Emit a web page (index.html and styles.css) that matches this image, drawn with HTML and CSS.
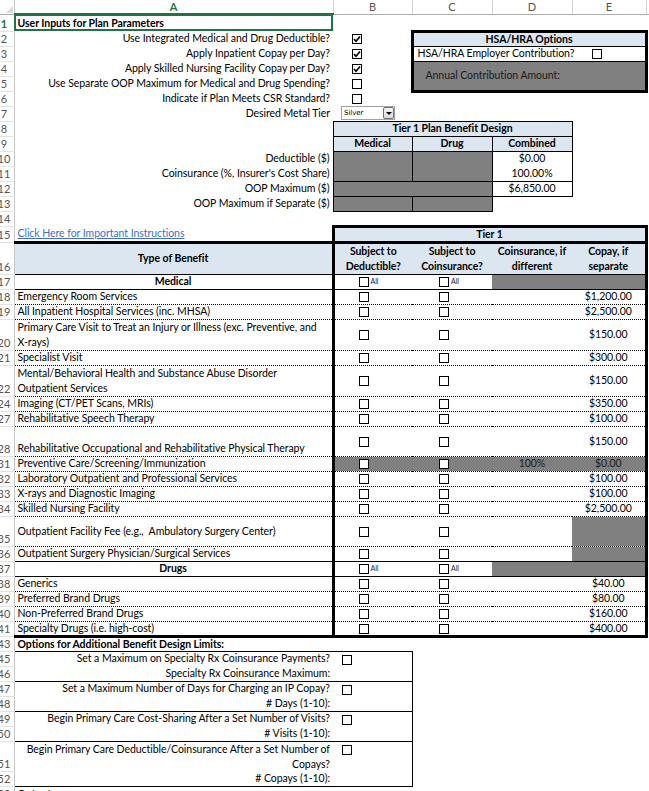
FILE: index.html
```html
<!DOCTYPE html>
<html>
<head>
<meta charset="utf-8">
<title>Plan Parameters</title>
<link rel="stylesheet" href="styles.css">
</head>
<body>
<table class="sheet">
<colgroup><col class="c-rh"><col class="c-a"><col class="c-b"><col class="c-c"><col class="c-d"><col class="c-e"><col class="c-f"></colgroup>
<tr class="hdr"><th class="corner"><span class="tri"></span></th><th class="ch ch-sel">A</th><th class="ch">B</th><th class="ch">C</th><th class="ch">D</th><th class="ch">E</th><th class="ch"></th></tr>

<tr class="h17"><th class="rh"><div class="rn rn-sel">1</div></th><td class="bold sel">User Inputs for Plan Parameters</td><td></td><td></td><td></td><td></td><td></td></tr>

<tr><th class="rh"><div class="rn">2</div></th><td class="r">Use Integrated Medical and Drug Deductible?</td><td class="pk19"><span class="cb"><svg viewBox="0 0 8 8"><polyline points="1,4 3,6.3 7,1.5"/></svg></span></td><td colspan="3" class="blue bold c hsa-top">HSA/HRA Options</td><td></td></tr>

<tr><th class="rh"><div class="rn">3</div></th><td class="r">Apply Inpatient Copay per Day?</td><td class="pk19"><span class="cb"><svg viewBox="0 0 8 8"><polyline points="1,4 3,6.3 7,1.5"/></svg></span></td><td colspan="2" class="hsa-l">HSA/HRA Employer Contribution?</td><td class="hsa-r pk20"><span class="cb"></span></td><td></td></tr>

<tr><th class="rh"><div class="rn">4</div></th><td class="r">Apply Skilled Nursing Facility Copay per Day?</td><td class="pk19"><span class="cb"><svg viewBox="0 0 8 8"><polyline points="1,4 3,6.3 7,1.5"/></svg></span></td><td colspan="3" rowspan="2" class="gray hsa-bot">Annual Contribution Amount:</td><td></td></tr>

<tr><th class="rh"><div class="rn">5</div></th><td class="r">Use Separate OOP Maximum for Medical and Drug Spending?</td><td class="pk19"><span class="cb"></span></td><td></td></tr>

<tr><th class="rh"><div class="rn">6</div></th><td class="r">Indicate if Plan Meets CSR Standard?</td><td class="pk19"><span class="cb"></span></td><td></td><td></td><td></td><td></td></tr>

<tr><th class="rh"><div class="rn">7</div></th><td class="r">Desired Metal Tier</td><td class="pk8"><span class="dd"><span class="dd-val">Silver</span><span class="dd-btn"><span class="dd-arrow"></span></span></span></td><td></td><td></td><td></td><td></td></tr>

<tr><th class="rh"><div class="rn">8</div></th><td></td><td colspan="3" class="blue bold c box">Tier 1 Plan Benefit Design</td><td></td><td></td></tr>

<tr><th class="rh"><div class="rn">9</div></th><td></td><td class="blue bold c box">Medical</td><td class="blue bold c box">Drug</td><td class="blue bold c box">Combined</td><td></td><td></td></tr>

<tr><th class="rh"><div class="rn">10</div></th><td class="r">Deductible ($)</td><td rowspan="2" class="gray box"></td><td rowspan="2" class="gray box"></td><td class="c box-top">$0.00</td><td></td><td></td></tr>

<tr><th class="rh"><div class="rn">11</div></th><td class="r">Coinsurance (%, Insurer's Cost Share)</td><td class="c box-bot">100.00%</td><td></td><td></td></tr>

<tr><th class="rh"><div class="rn">12</div></th><td class="r">OOP Maximum ($)</td><td colspan="2" class="gray box"></td><td class="c box">$6,850.00</td><td></td><td></td></tr>

<tr><th class="rh"><div class="rn">13</div></th><td class="r">OOP Maximum if Separate ($)</td><td class="gray box"></td><td class="gray box"></td><td></td><td></td><td></td></tr>

<tr><th class="rh"><div class="rn">14</div></th><td></td><td></td><td></td><td></td><td></td><td></td></tr>

<tr class="h16"><th class="rh"><div class="rn">15</div></th><td class="link-cell"><span class="link">Click Here for Important Instructions</span></td><td colspan="4" class="blue bold c tier">Tier 1</td><td></td></tr>

<tr class="h31"><th class="rh"><div class="rn">16</div></th><td class="blue bold c b-s">Type of Benefit</td><td class="blue bold c two b-s lT">Subject to<br>Deductible?</td><td class="blue bold c two b-s">Subject to<br>Coinsurance?</td><td class="blue bold c two b-s">Coinsurance, if<br>different</td><td class="blue bold c two b-s rT">Copay, if<br>separate</td><td></td></tr>

<tr><th class="rh"><div class="rn">17</div></th><td class="bold c b-s">Medical</td><td class="pk24 b-s lT"><span class="cb"></span><span class="all">All</span></td><td class="pk27 b-s"><span class="cb"></span><span class="all">All</span></td><td class="gray b-s"></td><td class="gray b-s rT"></td><td></td></tr>

<tr><th class="rh"><div class="rn">18</div></th><td class="b-d">Emergency Room Services</td><td class="pk24 b-d lT"><span class="cb"></span></td><td class="pk27 b-d"><span class="cb"></span></td><td class="b-d"></td><td class="c b-d rT">$1,200.00</td><td></td></tr>

<tr><th class="rh"><div class="rn">19</div></th><td class="b-d">All Inpatient Hospital Services (inc. MHSA)</td><td class="pk24 b-d lT"><span class="cb"></span></td><td class="pk27 b-d"><span class="cb"></span></td><td class="b-d"></td><td class="c b-d rT">$2,500.00</td><td></td></tr>

<tr class="h30"><th class="rh"><div class="rn">20</div></th><td class="b-d two">Primary Care Visit to Treat an Injury or Illness (exc. Preventive, and<br>X-rays)</td><td class="pk24 b-d lT"><span class="cb"></span></td><td class="pk27 b-d"><span class="cb"></span></td><td class="b-d"></td><td class="c b-d rT">$150.00</td><td></td></tr>

<tr><th class="rh"><div class="rn">21</div></th><td class="b-d">Specialist Visit</td><td class="pk24 b-d lT"><span class="cb"></span></td><td class="pk27 b-d"><span class="cb"></span></td><td class="b-d"></td><td class="c b-d rT">$300.00</td><td></td></tr>

<tr class="h30"><th class="rh"><div class="rn">22</div></th><td class="b-d two">Mental/Behavioral Health and Substance Abuse Disorder<br>Outpatient Services</td><td class="pk24 b-d lT"><span class="cb"></span></td><td class="pk27 b-d"><span class="cb"></span></td><td class="b-d"></td><td class="c b-d rT">$150.00</td><td></td></tr>

<tr><th class="rh"><div class="rn">24</div></th><td class="b-d">Imaging (CT/PET Scans, MRIs)</td><td class="pk24 b-d lT"><span class="cb"></span></td><td class="pk27 b-d"><span class="cb"></span></td><td class="b-d"></td><td class="c b-d rT">$350.00</td><td></td></tr>

<tr><th class="rh"><div class="rn">27</div></th><td class="b-d">Rehabilitative Speech Therapy</td><td class="pk24 b-d lT"><span class="cb"></span></td><td class="pk27 b-d"><span class="cb"></span></td><td class="b-d"></td><td class="c b-d rT">$100.00</td><td></td></tr>

<tr class="h30"><th class="rh"><div class="rn">28</div></th><td class="b-d bot">Rehabilitative Occupational and Rehabilitative Physical Therapy</td><td class="pk24 b-d lT"><span class="cb"></span></td><td class="pk27 b-d"><span class="cb"></span></td><td class="b-d"></td><td class="c b-d rT">$150.00</td><td></td></tr>

<tr><th class="rh"><div class="rn">31</div></th><td class="b-d">Preventive Care/Screening/Immunization</td><td class="pk24 b-d lT gray"><span class="cb"></span></td><td class="pk27 b-d gray"><span class="cb"></span></td><td class="c b-d gray dk">100%</td><td class="c b-d rT gray dk">$0.00</td><td></td></tr>

<tr><th class="rh"><div class="rn">32</div></th><td class="b-d">Laboratory Outpatient and Professional Services</td><td class="pk24 b-d lT"><span class="cb"></span></td><td class="pk27 b-d"><span class="cb"></span></td><td class="b-d"></td><td class="c b-d rT">$100.00</td><td></td></tr>

<tr><th class="rh"><div class="rn">33</div></th><td class="b-d">X-rays and Diagnostic Imaging</td><td class="pk24 b-d lT"><span class="cb"></span></td><td class="pk27 b-d"><span class="cb"></span></td><td class="b-d"></td><td class="c b-d rT">$100.00</td><td></td></tr>

<tr><th class="rh"><div class="rn">34</div></th><td class="b-d">Skilled Nursing Facility</td><td class="pk24 b-d lT"><span class="cb"></span></td><td class="pk27 b-d"><span class="cb"></span></td><td class="b-d"></td><td class="c b-d rT">$2,500.00</td><td></td></tr>

<tr class="h30"><th class="rh"><div class="rn">35</div></th><td class="b-d">Outpatient Facility Fee (e.g.,&nbsp; Ambulatory Surgery Center)</td><td class="pk24 b-d lT"><span class="cb"></span></td><td class="pk27 b-d"><span class="cb"></span></td><td class="b-d"></td><td class="b-d rT gray"></td><td></td></tr>

<tr><th class="rh"><div class="rn">36</div></th><td class="b-s">Outpatient Surgery Physician/Surgical Services</td><td class="pk24 b-s lT"><span class="cb"></span></td><td class="pk27 b-s"><span class="cb"></span></td><td class="b-s"></td><td class="b-s rT gray"></td><td></td></tr>

<tr><th class="rh"><div class="rn">37</div></th><td class="bold c b-s">Drugs</td><td class="pk24 b-s lT"><span class="cb"></span><span class="all">All</span></td><td class="pk27 b-s"><span class="cb"></span><span class="all">All</span></td><td class="gray b-s"></td><td class="gray b-s rT"></td><td></td></tr>

<tr><th class="rh"><div class="rn">38</div></th><td class="b-d">Generics</td><td class="pk24 b-d lT"><span class="cb"></span></td><td class="pk27 b-d"><span class="cb"></span></td><td class="b-d"></td><td class="c b-d rT">$40.00</td><td></td></tr>

<tr><th class="rh"><div class="rn">39</div></th><td class="b-d">Preferred Brand Drugs</td><td class="pk24 b-d lT"><span class="cb"></span></td><td class="pk27 b-d"><span class="cb"></span></td><td class="b-d"></td><td class="c b-d rT">$80.00</td><td></td></tr>

<tr><th class="rh"><div class="rn">40</div></th><td class="b-d">Non-Preferred Brand Drugs</td><td class="pk24 b-d lT"><span class="cb"></span></td><td class="pk27 b-d"><span class="cb"></span></td><td class="b-d"></td><td class="c b-d rT">$160.00</td><td></td></tr>

<tr><th class="rh"><div class="rn">41</div></th><td class="b-T">Specialty Drugs (i.e. high-cost)</td><td class="pk24 b-T lT"><span class="cb"></span></td><td class="pk27 b-T"><span class="cb"></span></td><td class="b-T"></td><td class="c b-T rT">$400.00</td><td></td></tr>

<tr><th class="rh"><div class="rn">43</div></th><td class="bold b-s">Options for Additional Benefit Design Limits:</td><td class="b-s"></td><td></td><td></td><td></td><td></td></tr>

<tr><th class="rh"><div class="rn">45</div></th><td class="r">Set a Maximum on Specialty Rx Coinsurance Payments?</td><td class="opt-cb r-s"><span class="cb"></span></td><td></td><td></td><td></td><td></td></tr>
<tr><th class="rh"><div class="rn">46</div></th><td class="r b-s">Specialty Rx Coinsurance Maximum:</td><td class="b-s r-s"></td><td></td><td></td><td></td><td></td></tr>
<tr><th class="rh"><div class="rn">47</div></th><td class="r">Set a Maximum Number of Days for Charging an IP Copay?</td><td class="opt-cb r-s"><span class="cb"></span></td><td></td><td></td><td></td><td></td></tr>
<tr><th class="rh"><div class="rn">48</div></th><td class="r b-s"># Days (1-10):</td><td class="b-s r-s"></td><td></td><td></td><td></td><td></td></tr>
<tr><th class="rh"><div class="rn">49</div></th><td class="r">Begin Primary Care Cost-Sharing After a Set Number of Visits?</td><td class="opt-cb r-s"><span class="cb"></span></td><td></td><td></td><td></td><td></td></tr>
<tr><th class="rh"><div class="rn">50</div></th><td class="r b-s"># Visits (1-10):</td><td class="b-s r-s"></td><td></td><td></td><td></td><td></td></tr>
<tr class="h30"><th class="rh"><div class="rn">51</div></th><td class="r two">Begin Primary Care Deductible/Coinsurance After a Set Number of<br>Copays?</td><td class="opt-cb r-s"><span class="cb"></span></td><td></td><td></td><td></td><td></td></tr>
<tr><th class="rh"><div class="rn">52</div></th><td class="r b-s"># Copays (1-10):</td><td class="b-s r-s"></td><td></td><td></td><td></td><td></td></tr>
<tr><th class="rh"><div class="rn">53</div></th><td class="bold">Output</td><td></td><td></td><td></td><td></td><td></td></tr>
</table>
</body>
</html>
```

FILE: styles.css
```css
html, body {
  margin: 0;
  padding: 0;
  background: #fff;
  overflow: hidden;
}
body {
  width: 649px;
  height: 791px;
}
.sheet {
  border-collapse: collapse;
  table-layout: fixed;
  width: 676px;
  font-family: Lato, "Liberation Sans", sans-serif;
  font-size: 10.5px;
  letter-spacing: -0.05px;
  color: #000;
}
.c-rh { width: 14px; }
.c-a { width: 319px; }
.c-b { width: 79px; }
.c-c { width: 80px; }
.c-d { width: 80px; }
.c-e { width: 74px; }
.c-f { width: 30px; }

.sheet tr { height: 15px; }
.sheet tr.hdr { height: 14px; }
.sheet tr.h16 { height: 16px; }
.sheet tr.h17 { height: 17px; }
.sheet tr.h30 { height: 30px; }
.sheet tr.h31 { height: 31px; }

.sheet td {
  padding: 0 3px;
  line-height: 13px;
  white-space: nowrap;
  overflow: hidden;
  vertical-align: middle;
}

/* headers */
.corner {
  position: relative;
  padding: 0;
  border-right: 1px solid #c6c6c6;
  border-bottom: 1px solid #ababab;
}
.tri {
  position: absolute;
  right: 1px;
  bottom: 1px;
  width: 0;
  height: 0;
  border-left: 7px solid transparent;
  border-bottom: 7px solid #d9d9d9;
}
.ch {
  padding: 0;
  font-weight: normal;
  color: #555;
  font-size: 11px;
  line-height: 13px;
  text-align: center;
  border-right: 1px solid #d4d4d4;
  border-bottom: 1px solid #ababab;
}
.ch-sel {
  color: #217346;
  font-weight: bold;
  border-bottom: 2px solid #217346;
}
.rh {
  padding: 0;
  overflow: hidden;
  vertical-align: bottom;
  border-right: 1px solid #c6c6c6;
  border-bottom: 1px solid #e2e2e2;
  font-weight: normal;
}
.rn {
  width: 30px;
  margin-left: -11px;
  text-align: center;
  line-height: 14px;
  color: #555;
  font-size: 11px;
  letter-spacing: 0;
}
.rn-sel {
  color: #217346;
  font-weight: bold;
}

/* selection */
.sel {
  position: relative;
  outline: 2px solid #217346;
  outline-offset: -2px;
}

/* text helpers */
.bold { font-weight: bold; }
.r { text-align: right; }
.c { text-align: center; }
.sheet td.two { line-height: 15px; }
.sheet td.bot { vertical-align: bottom; padding-bottom: 1px; }
.dk { color: #1a1a1a; }

.blue { background: #dce6f1; }
.gray { background: #808080; }

/* checkboxes */
.cb {
  display: inline-block;
  box-sizing: border-box;
  width: 10px;
  height: 10px;
  border: 1px solid #000;
  background: #fff;
  vertical-align: middle;
  position: relative;
}
.cb svg {
  position: absolute;
  left: 0;
  top: 0;
  width: 8px;
  height: 8px;
}
.cb polyline {
  fill: none;
  stroke: #000;
  stroke-width: 1.7;
}
.all {
  display: inline-block;
  font-size: 7px;
  margin-left: 2px;
  vertical-align: middle;
  color: #222;
}
.sheet td.pk19 { padding-left: 19px; }
.sheet td.pk20 { padding-left: 20px; }
.sheet td.pk24 { padding-left: 24px; }
.sheet td.pk27 { padding-left: 27px; }
.sheet td.pk8 { padding-left: 8px; }
.sheet td.opt-cb {
  padding-left: 9px;
  padding-top: 3px;
  line-height: 10px;
  vertical-align: top;
}
.opt-cb .cb { vertical-align: top; }

/* dropdown */
.dd {
  display: inline-flex;
  box-sizing: border-box;
  width: 54px;
  height: 14px;
  border: 1px solid #a0a0a0;
  background: #fff;
  vertical-align: middle;
  align-items: center;
  justify-content: space-between;
}
.dd-val {
  font-family: "DejaVu Sans", sans-serif;
  font-size: 7px;
  padding-left: 2px;
  line-height: 10px;
}
.dd-btn {
  box-sizing: border-box;
  width: 11px;
  height: 12px;
  border: 1px solid #707070;
  border-radius: 2px;
  background: linear-gradient(#f4f4f4, #dcdcdc);
  display: flex;
  align-items: center;
  justify-content: center;
}
.dd-arrow {
  width: 0;
  height: 0;
  border-left: 3px solid transparent;
  border-right: 3px solid transparent;
  border-top: 3px solid #000;
}

/* HSA box */
.hsa-top {
  border: 3px solid #000;
  border-bottom: 1px solid #000;
}
.sheet td.hsa-l {
  border-left: 3px solid #000;
  border-bottom: 1px solid #000;
  padding-left: 4px;
  padding-right: 0;
  overflow: visible;
}
.hsa-r {
  border-right: 3px solid #000;
  border-bottom: 1px solid #000;
}
.sheet td.hsa-bot {
  border: 3px solid #000;
  border-top: 1px solid #000;
  color: #1a1a1a;
  padding-left: 12px;
}

/* plan design box */
.box { border: 1px solid #000; }
.box-top { border: 1px solid #000; border-bottom: none; }
.box-bot { border: 1px solid #000; border-top: none; }

/* tier 1 table */
.link-cell { border-bottom: 3px solid #000; }
.link {
  color: #3f6fc6;
  text-decoration: underline;
}
.tier { border: 3px solid #000; }
.b-s { border-bottom: 1px solid #000; }
.b-d { border-bottom: 1px dotted #000; }
.b-T { border-bottom: 3px solid #000; }
.lT { border-left: 3px solid #000; }
.rT { border-right: 3px solid #000; }
.r-s { border-right: 1px solid #000; }
```
